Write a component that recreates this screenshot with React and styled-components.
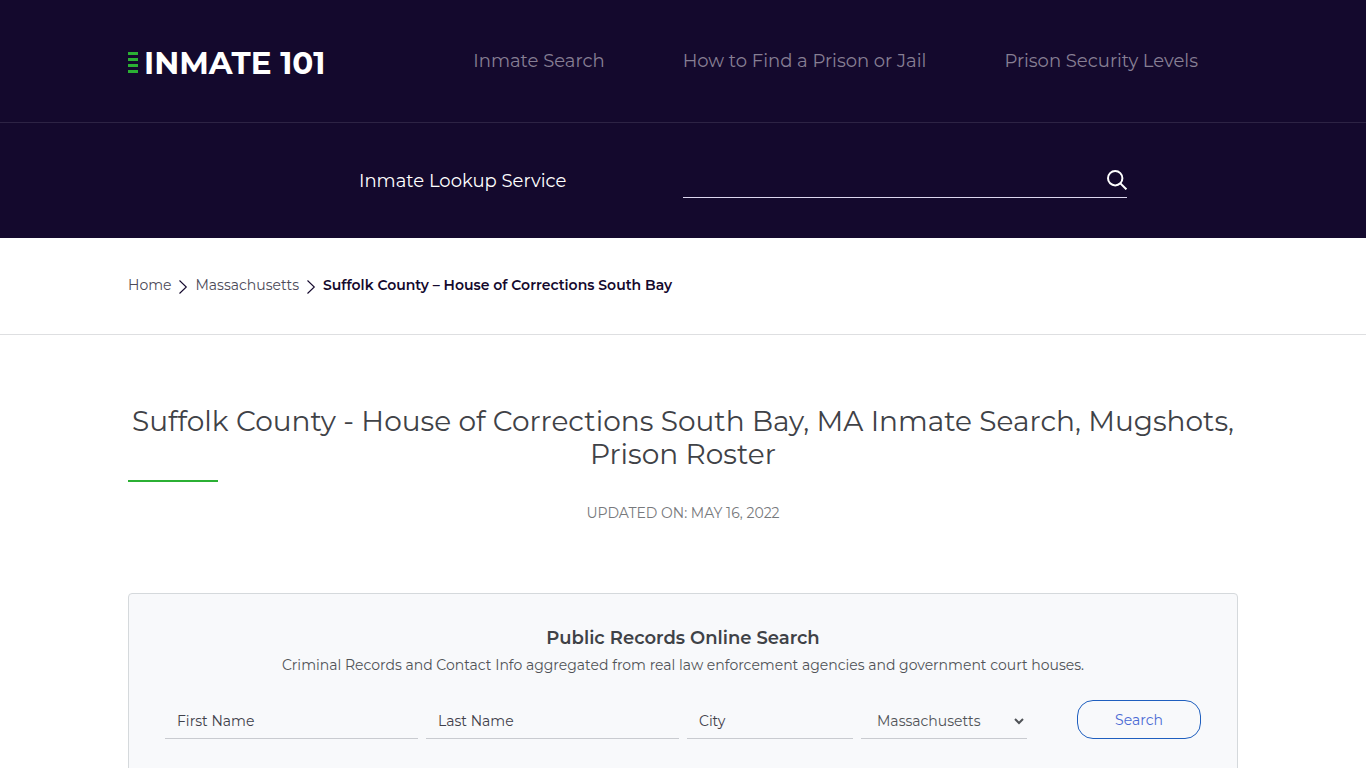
import React from 'react';
import styled, { createGlobalStyle } from 'styled-components';

const GlobalStyle = createGlobalStyle`
  *, *::before, *::after {
    box-sizing: border-box;
  }

  body {
    margin: 0;
    background: #fff;
    color: #3f4247;
    font-family: Montserrat, Inter, 'Liberation Sans', sans-serif;
    font-size: 14px;
    font-weight: 400;
  }

  input, select, button {
    font: inherit;
  }
`;

const Container = styled.div`
  width: 100%;
  max-width: 1142px;
  margin: 0 auto;
  padding: 0 16px;
`;

const Header = styled.header`
  background: #14092d;
`;

const TopBar = styled.div`
  border-bottom: 1px solid #2d2344;
`;

const TopBarInner = styled(Container)`
  display: flex;
  align-items: center;
  justify-content: space-between;
  min-height: 122px;
`;

const Logo = styled.a`
  display: flex;
  align-items: center;
  gap: 6px;
  padding-top: 3px;
  color: #fff;
  font-size: 31px;
  font-weight: 700;
  line-height: 40px;
  text-decoration: none;
  white-space: nowrap;
`;

const Nav = styled.nav`
  display: flex;
  gap: 78px;
  padding-right: 40px;
`;

const NavLink = styled.a`
  color: #877f94;
  font-size: 18px;
  font-weight: 400;
  line-height: 24px;
  text-decoration: none;
`;

const LookupBar = styled(Container)`
  display: grid;
  grid-template-columns: 324fr 444fr;
  align-items: center;
  min-height: 115px;

  @media (min-width: 900px) {
    grid-template-columns: 231fr 324fr 444fr 111fr;
  }
`;

const LookupLabel = styled.label`
  color: #fff;
  font-size: 18px;
  font-weight: 400;
  line-height: 24px;

  @media (min-width: 900px) {
    grid-column: 2;
  }
`;

const LookupField = styled.div`
  display: flex;
  align-items: center;
  height: 34px;
  border-bottom: 1px solid #dcd6ee;
`;

const LookupInput = styled.input`
  flex: 1;
  min-width: 0;
  height: 32px;
  border: none;
  outline: none;
  background: transparent;
  color: #fff;
`;

const IconButton = styled.button`
  display: flex;
  padding: 0;
  border: none;
  background: transparent;
  color: #fff;
  cursor: pointer;
`;

const BreadcrumbBar = styled.div`
  border-bottom: 1px solid #dedfe1;
`;

const Breadcrumbs = styled(Container)`
  display: flex;
  align-items: flex-start;
  gap: 7px;
  padding-top: 37px;
  padding-bottom: 39px;
  color: #14092d;
  line-height: 20px;
`;

const Crumb = styled.a`
  color: #4c4a58;
  text-decoration: none;
`;

const CurrentCrumb = styled.span`
  font-weight: 600;
`;

const Main = styled(Container)`
  padding-top: 70px;
`;

const Title = styled.h1`
  margin: 0;
  padding-bottom: 9px;
  font-size: 28px;
  font-weight: 400;
  line-height: 33px;
  text-align: center;

  &::after {
    content: '';
    display: block;
    width: 90px;
    height: 2px;
    margin-top: 9px;
    background: #2bb034;
  }
`;

const Updated = styled.p`
  margin: 12px 0 70px;
  color: #77797c;
  line-height: 20px;
  text-align: center;
  text-transform: uppercase;
`;

const Card = styled.section`
  padding: 32px 36px 40px;
  border: 1px solid #d5d9dc;
  border-radius: 4px;
  background: #f8f9fb;
`;

const CardTitle = styled.h2`
  margin: 0;
  font-size: 18px;
  font-weight: 600;
  line-height: 24px;
  text-align: center;
`;

const CardText = styled.p`
  margin: 4px 0 24px;
  color: #505357;
  line-height: 22px;
  text-align: center;
`;

const SearchForm = styled.form`
  display: grid;
  grid-template-columns: 253fr 253fr 166fr 166fr 166fr;
  gap: 8px;
`;

const TextInput = styled.input`
  width: 100%;
  height: 39px;
  padding: 4px 12px 0;
  border: none;
  border-bottom: 1px solid #c9cbd0;
  outline: none;
  background: transparent;
  color: #3f404a;

  &::placeholder {
    color: #3f404a;
    opacity: 1;
  }
`;

const StateSelect = styled.select`
  align-self: end;
  width: 100%;
  height: 35px;
  padding: 0 0 0 12px;
  border: none;
  border-bottom: 1px solid #c9cbd0;
  border-radius: 0;
  outline: none;
  background: transparent;
  color: #505357;
`;

const SubmitButton = styled.button`
  justify-self: end;
  width: 124px;
  max-width: 100%;
  height: 39px;
  border: 1px solid #1f5fbf;
  border-radius: 16px;
  background: transparent;
  color: #4a6ad4;
  cursor: pointer;
`;

const navItems = ['Inmate Search', 'How to Find a Prison or Jail', 'Prison Security Levels'];

const LogoBars = () => (
  <svg width="10" height="22" viewBox="0 0 10 22" fill="#2bb034" aria-hidden="true">
    <rect width="10" height="3" />
    <rect y="6" width="10" height="3" />
    <rect y="12" width="10" height="3" />
    <rect y="18" width="10" height="3" />
  </svg>
);

const SearchIcon = () => (
  <svg width="20" height="20" viewBox="0 0 20 20" fill="none" stroke="currentColor" strokeWidth="2" aria-hidden="true">
    <circle cx="8.2" cy="8.2" r="7.2" />
    <path d="M13.4 13.4l6 6" />
  </svg>
);

const Chevron = () => (
  <svg width="10" height="20" viewBox="0 0 10 20" fill="none" stroke="currentColor" strokeWidth="1.1" aria-hidden="true">
    <path d="M1.5 5.5L8.3 12L1.5 18.5" />
  </svg>
);

const App = () => {
  return (
    <>
      <GlobalStyle />
      <Header>
        <TopBar>
          <TopBarInner>
            <Logo href="#">
              <LogoBars />
              INMATE 101
            </Logo>
            <Nav>
              {navItems.map((item) => (
                <NavLink key={item} href="#">{item}</NavLink>
              ))}
            </Nav>
          </TopBarInner>
        </TopBar>
        <LookupBar>
          <LookupLabel htmlFor="lookup">Inmate Lookup Service</LookupLabel>
          <LookupField>
            <LookupInput id="lookup" type="text" />
            <IconButton type="button" aria-label="Search inmates">
              <SearchIcon />
            </IconButton>
          </LookupField>
        </LookupBar>
      </Header>

      <BreadcrumbBar>
        <Breadcrumbs as="nav" aria-label="Breadcrumb">
          <Crumb href="#">Home</Crumb>
          <Chevron />
          <Crumb href="#">Massachusetts</Crumb>
          <Chevron />
          <CurrentCrumb>Suffolk County – House of Corrections South Bay</CurrentCrumb>
        </Breadcrumbs>
      </BreadcrumbBar>

      <Main as="main">
        <Title>Suffolk County - House of Corrections South Bay, MA Inmate Search, Mugshots, Prison Roster</Title>
        <Updated>Updated on: May 16, 2022</Updated>
        <Card>
          <CardTitle>Public Records Online Search</CardTitle>
          <CardText>
            Criminal Records and Contact Info aggregated from real law enforcement agencies and government court houses.
          </CardText>
          <SearchForm onSubmit={(e) => e.preventDefault()}>
            <TextInput type="text" placeholder="First Name" aria-label="First Name" />
            <TextInput type="text" placeholder="Last Name" aria-label="Last Name" />
            <TextInput type="text" placeholder="City" aria-label="City" />
            <StateSelect aria-label="State" defaultValue="MA">
              <option value="MA">Massachusetts</option>
            </StateSelect>
            <SubmitButton type="submit">Search</SubmitButton>
          </SearchForm>
        </Card>
      </Main>
    </>
  );
};

export default App;
